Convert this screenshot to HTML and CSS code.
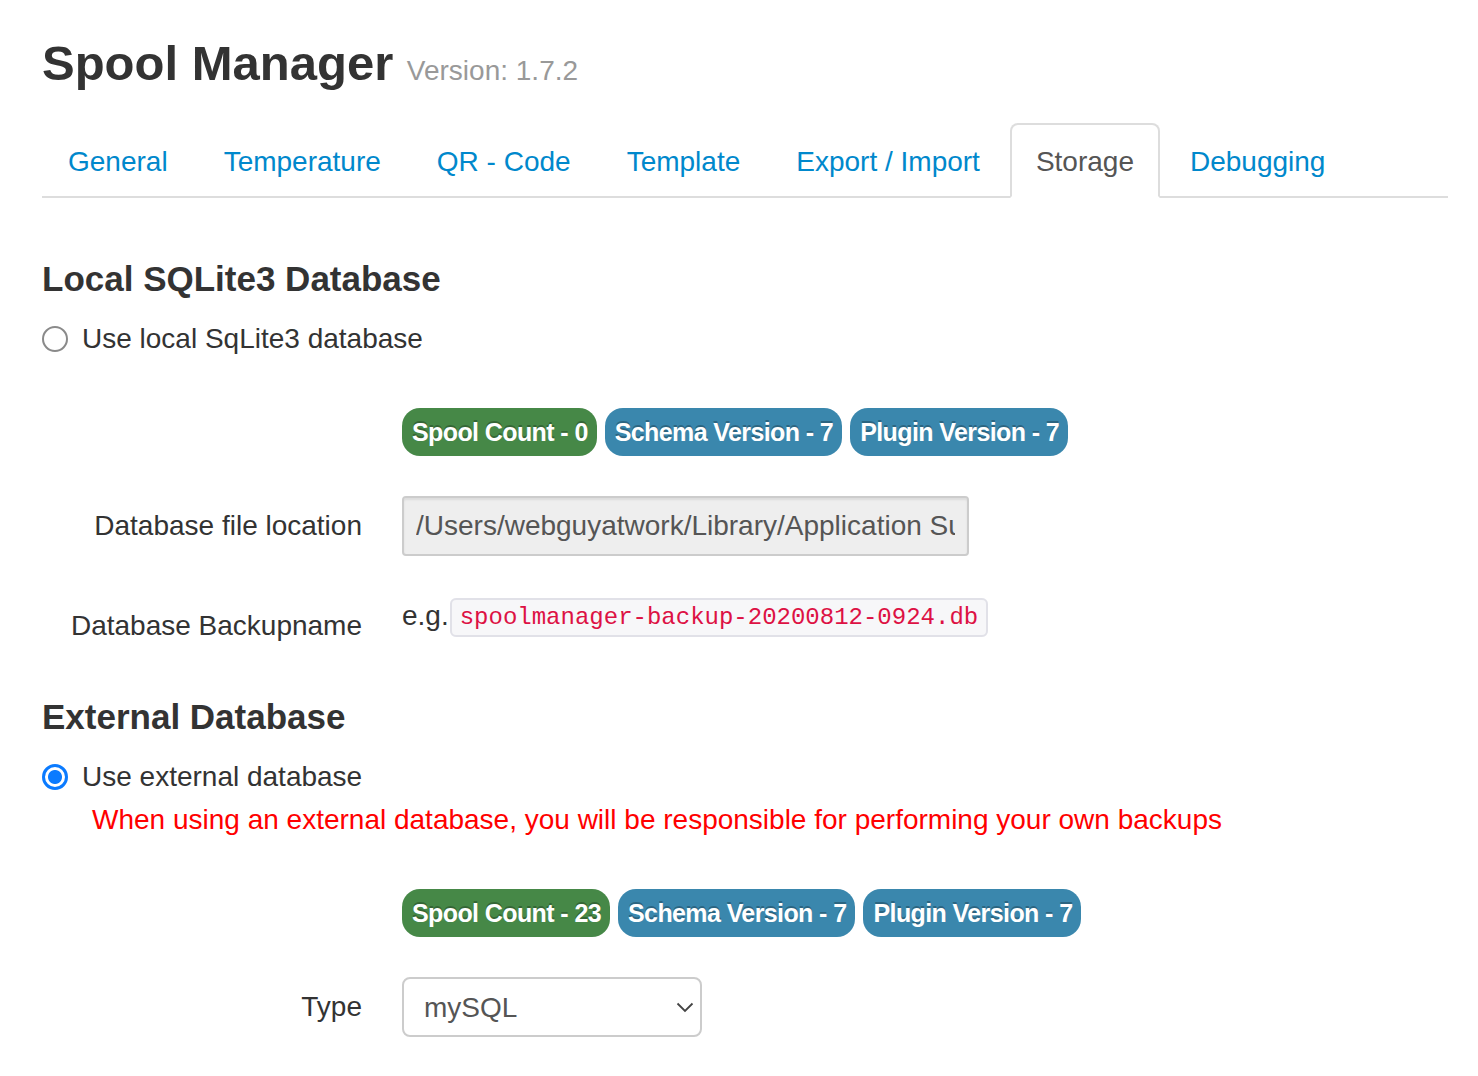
FILE: index.html
```html
<!DOCTYPE html>
<html lang="en">
<head>
<meta charset="utf-8">
<title>Spool Manager - Storage</title>
<link rel="stylesheet" href="styles.css">
</head>
<body>
<div class="page">
  <h1 class="title">Spool Manager <small class="version">Version: 1.7.2</small></h1>

  <ul class="tabs">
    <li class="tab"><a href="#">General</a></li>
    <li class="tab"><a href="#">Temperature</a></li>
    <li class="tab"><a href="#">QR - Code</a></li>
    <li class="tab"><a href="#">Template</a></li>
    <li class="tab"><a href="#">Export / Import</a></li>
    <li class="tab active"><a href="#">Storage</a></li>
    <li class="tab"><a href="#">Debugging</a></li>
  </ul>

  <section class="pane">
    <h4 class="section-title first">Local SQLite3 Database</h4>
    <label class="radio-line">
      <input class="radio" type="radio" name="dbtype">
      Use local SqLite3 database
    </label>

    <div class="form-row badges-row">
      <div class="control-label"></div>
      <div class="controls badges">
        <span class="badge green">Spool Count - 0</span>
        <span class="badge blue">Schema Version - 7</span>
        <span class="badge blue">Plugin Version - 7</span>
      </div>
    </div>

    <div class="form-row input-row">
      <label class="control-label">Database file location</label>
      <div class="controls">
        <input class="text-input" type="text" readonly value="/Users/webguyatwork/Library/Application Support/OctoPrint/data/SpoolManager/spoolmanager.db">
      </div>
    </div>

    <div class="form-row code-row">
      <label class="control-label padded">Database Backupname</label>
      <div class="controls text-controls">e.g.<code class="code">spoolmanager-backup-20200812-0924.db</code></div>
    </div>

    <h4 class="section-title second">External Database</h4>
    <label class="radio-line second">
      <input class="radio" type="radio" name="dbtype" checked>
      Use external database
    </label>
    <div class="warning">When using an external database, you will be responsible for performing your own backups</div>

    <div class="form-row badges-row second">
      <div class="control-label"></div>
      <div class="controls badges">
        <span class="badge green">Spool Count - 23</span>
        <span class="badge blue">Schema Version - 7</span>
        <span class="badge blue">Plugin Version - 7</span>
      </div>
    </div>

    <div class="form-row input-row">
      <label class="control-label">Type</label>
      <div class="controls">
        <div class="select-wrap">
          <select class="select">
            <option>mySQL</option>
            <option>PostgreSQL</option>
          </select>
          <svg class="chevron" width="18" height="11" viewBox="0 0 18 11"><path d="M1.5 1.5 L9 9 L16.5 1.5" fill="none" stroke="#444" stroke-width="1.8"/></svg>
        </div>
      </div>
    </div>
  </section>
</div>
</body>
</html>
```

FILE: styles.css
```css
* { box-sizing: border-box; }

html, body {
  margin: 0;
  padding: 0;
  background: #fff;
}

body {
  font-family: "Liberation Sans", Arial, Helvetica, sans-serif;
  font-size: 28px;
  line-height: 40px;
  color: #333;
}

.page {
  padding: 0 30px 0 42px;
}

.title {
  margin: 33px 0 0;
  font-size: 49px;
  line-height: 60px;
  font-weight: bold;
  color: #333;
}

.version {
  font-size: 28px;
  font-weight: normal;
  color: #999;
}

.tabs {
  list-style: none;
  margin: 22px 0 0;
  padding: 0;
  display: flex;
  border-bottom: 2px solid #ddd;
}

.tab {
  margin-bottom: -2px;
}

.tab a {
  display: block;
  padding: 17px 24px 14px;
  margin-right: 4px;
  line-height: 40px;
  border: 2px solid transparent;
  border-radius: 8px 8px 0 0;
  color: #0088cc;
  text-decoration: none;
}

.tab.active a {
  color: #555;
  background: #fff;
  border-color: #ddd #ddd transparent;
}

.section-title {
  margin: 0;
  font-size: 35px;
  line-height: 40px;
  font-weight: bold;
  color: #333;
}

.section-title.first { margin-top: 61px; }
.section-title.second { margin-top: 51px; }

.radio-line {
  display: flex;
  align-items: center;
  margin-top: 20px;
  line-height: 40px;
  color: #333;
}

.radio-line.second { margin-top: 20px; }

.radio {
  appearance: none;
  -webkit-appearance: none;
  width: 26px;
  height: 26px;
  margin: 0 14px 0 0;
  border: 2px solid #8a8a8a;
  border-radius: 50%;
  background: #fff;
  flex: none;
}

.radio:checked {
  border: 3px solid #0b7bff;
  background: radial-gradient(circle, #0b7bff 0 6.5px, #fff 7.5px);
}

.warning {
  margin-top: 3px;
  padding-left: 50px;
  color: #ff0000;
  line-height: 40px;
}

.form-row {
  display: grid;
  grid-template-columns: 320px 1fr;
  column-gap: 40px;
}

.badges-row { margin-top: 49px; }
.badges-row.second { margin-top: 49px; }
.input-row { margin-top: 40px; }
.code-row { margin-top: 40px; }

.control-label {
  text-align: right;
  padding-top: 10px;
  line-height: 40px;
  color: #333;
}

.controls {
  min-width: 0;
}

.badges {
  display: flex;
  gap: 8px;
}

.badge {
  display: inline-flex;
  align-items: center;
  height: 48px;
  padding: 0 9px 0 10px;
  border-radius: 18px;
  font-family: "Liberation Sans", Arial, sans-serif;
  font-weight: bold;
  font-size: 25px;
  letter-spacing: -0.6px;
  color: #fff;
  text-shadow: 0 -2px 0 rgba(0, 0, 0, 0.25);
  white-space: nowrap;
}

.badge.green { background: #468847; }
.badge.blue { background: #3a87ad; }

.text-input {
  display: block;
  width: 567px;
  height: 60px;
  padding: 8px 12px;
  border: 2px solid #ccc;
  border-radius: 4px;
  background: #eee;
  color: #555;
  font-family: inherit;
  font-size: 28px;
  line-height: 40px;
  box-shadow: inset 0 2px 2px rgba(0, 0, 0, 0.075);
  outline: none;
}

.text-controls {
  line-height: 40px;
  color: #333;
}

.code {
  margin-left: 1px;
  padding: 4px 8px;
  font-family: "Liberation Mono", "DejaVu Sans Mono", monospace;
  font-size: 24px;
  line-height: 28px;
  color: #dd1144;
  background: #f7f7f9;
  border: 2px solid #e1e1e8;
  border-radius: 6px;
  vertical-align: 1px;
}

.select-wrap {
  position: relative;
  width: 300px;
  height: 60px;
}

.select {
  appearance: none;
  -webkit-appearance: none;
  width: 300px;
  height: 60px;
  padding: 0 20px;
  border: 2px solid #ccc;
  border-radius: 8px;
  background: #fff;
  color: #555;
  font-family: inherit;
  font-size: 28px;
  outline: none;
}

.chevron {
  position: absolute;
  right: 8px;
  top: 25px;
  pointer-events: none;
}
```
